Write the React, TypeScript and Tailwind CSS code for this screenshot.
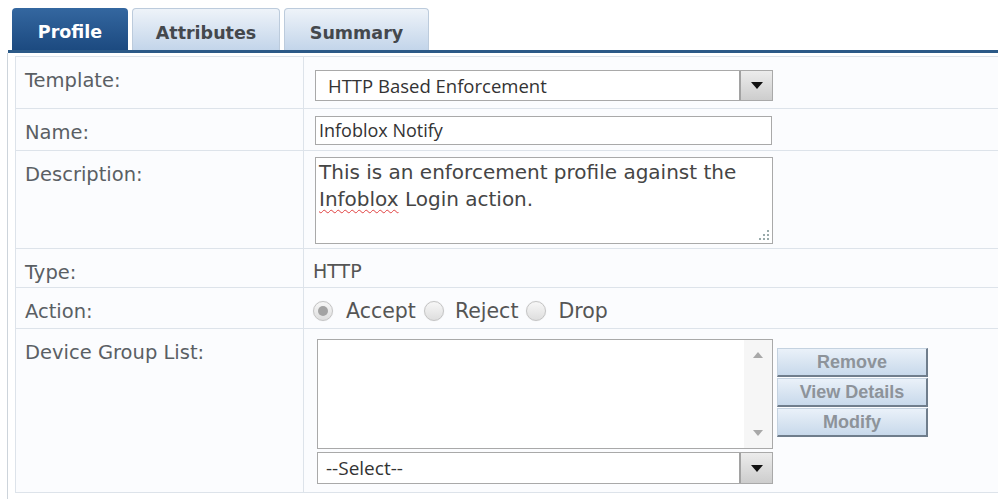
import React from "react";

function Tab({ active, w, children }: { active?: boolean; w: string; children: React.ReactNode }) {
  const base = `${w} h-[42px] rounded-t-[4px] flex items-center justify-center pt-[7px] text-[17.5px] font-bold font-['DejaVu_Sans',sans-serif]`;
  if (active) {
    return (
      <div className={`${base} bg-linear-to-b from-[#3467a0] to-[#1c4a80] text-white`}>{children}</div>
    );
  }
  return (
    <div className={`${base} border border-b-0 border-[#bccbdc] bg-linear-to-b from-[#eef3f9] to-[#c3d5ea] text-[#44484d]`}>
      {children}
    </div>
  );
}

function DropArrow({ h }: { h: string }) {
  return (
    <div className={`w-[33px] ${h} border-l-2 border-[#a2a2a2] bg-linear-to-b from-[#ececec] to-[#cdcdcd] flex items-center justify-center`}>
      <svg width="12" height="7" viewBox="0 0 12 7">
        <polygon points="0,0 12,0 6,7" fill="#111" />
      </svg>
    </div>
  );
}

function Row({ label, h, children }: { label: string; h: string; children: React.ReactNode }) {
  return (
    <div className={`flex ${h} border-b border-[#dde3ea]`}>
      <div className="w-[288px] shrink-0 border-r border-[#dde3ea] pl-[9px] pt-[13px] text-[19.5px] leading-[22px] text-[#5a5f64]">
        {label}
      </div>
      <div className="flex-1">{children}</div>
    </div>
  );
}

function Radio({ checked }: { checked?: boolean }) {
  return (
    <div className="w-[20px] h-[20px] rounded-full border border-[#c4c4c4] bg-linear-to-b from-[#f7f7f7] to-[#dedede] flex items-center justify-center shadow-[0_0_1px_#ddd]">
      {checked && <div className="w-[10px] h-[10px] rounded-full bg-[#a3a3a3]" />}
    </div>
  );
}

function SideButton({ children }: { children: React.ReactNode }) {
  return (
    <div className="w-[151px] h-[29px] border border-[#c4d2e0] border-r-2 border-b-2 border-r-[#6f7d8c] border-b-[#6f7d8c] bg-linear-to-b from-[#eaf1f9] to-[#c8d9eb] flex items-center justify-center text-[18px] font-bold text-[#8d939a] font-['Liberation_Sans',sans-serif]">
      {children}
    </div>
  );
}

export default function App() {
  return (
    <div className="w-[1004px] h-[499px] bg-white overflow-hidden font-['DejaVu_Sans',sans-serif]">
      <div className="flex gap-[4px] pl-[12px] pt-[8px] items-end">
        <Tab active w="w-[116px]">Profile</Tab>
        <Tab w="w-[148px]">Attributes</Tab>
        <Tab w="w-[145px]">Summary</Tab>
      </div>
      <div className="ml-[8px] w-[990px] h-[3px] bg-[#2b5987]" />
      <div className="ml-[7px] w-[991px] h-[446px] border-l border-[#cdd4db] pl-[7px] pt-[3px]">
        <div className="border-t border-l border-[#dde3ea] bg-[#fbfcfe]">
          <Row label="Template:" h="h-[52px]">
            <div className="pl-[11px] pt-[13px]">
              <div className="w-[458px] h-[31px] border border-[#a9a9a9] bg-white flex">
                <div className="flex-1 pl-[12px] flex items-center text-[18.5px] text-[#333] font-['Open_Sans',sans-serif]">
                  HTTP Based Enforcement
                </div>
                <DropArrow h="h-full" />
              </div>
            </div>
          </Row>
          <Row label="Name:" h="h-[42px]">
            <div className="pl-[11px] pt-[7px]">
              <div className="w-[457px] h-[29px] border border-[#a9a9a9] bg-white pl-[3px] flex items-center text-[18px] text-[#333] font-['Open_Sans',sans-serif]">
                Infoblox Notify
              </div>
            </div>
          </Row>
          <Row label="Description:" h="h-[98px]">
            <div className="pl-[11px] pt-[6px]">
              <div className="relative w-[458px] h-[87px] border border-[#a9a9a9] bg-white pl-[3px] pt-[1px] text-[20px] leading-[27px] text-[#454545]">
                This is an enforcement profile against the
                <br />
                <span className="underline decoration-wavy decoration-[#e04040] decoration-1 underline-offset-[3px]">Infoblox</span> Login action.
                <svg className="absolute right-[3px] bottom-[3px]" width="10" height="10" viewBox="0 0 10 10">
                  <rect x="8" y="0" width="2" height="2" fill="#9aa" />
                  <rect x="8" y="4" width="2" height="2" fill="#9aa" />
                  <rect x="4" y="4" width="2" height="2" fill="#9aa" />
                  <rect x="8" y="8" width="2" height="2" fill="#9aa" />
                  <rect x="4" y="8" width="2" height="2" fill="#9aa" />
                  <rect x="0" y="8" width="2" height="2" fill="#9aa" />
                </svg>
              </div>
            </div>
          </Row>
          <Row label="Type:" h="h-[39px]">
            <div className="pl-[9px] pt-[11px] text-[19px] leading-[22px] text-[#555]">HTTP</div>
          </Row>
          <Row label="Action:" h="h-[41px]">
            <div className="pl-[9px] pt-[12px] flex items-center h-[34px] text-[20.5px] leading-[22px] text-[#555]">
              <Radio checked />
              <span className="ml-[13px]">Accept</span>
              <span className="ml-[8px]"><Radio /></span>
              <span className="ml-[11px]">Reject</span>
              <span className="ml-[8px]"><Radio /></span>
              <span className="ml-[12px]">Drop</span>
            </div>
          </Row>
          <Row label="Device Group List:" h="h-[164px]">
            <div className="pl-[13px] pt-[10px] flex">
              <div className="flex flex-col">
                <div className="w-[456px] h-[110px] border border-[#a9a9a9] bg-white flex justify-end">
                  <div className="w-[28px] h-full bg-[#f6f6f6] flex flex-col items-center justify-between py-[12px]">
                    <svg width="10" height="6" viewBox="0 0 10 6"><polygon points="0,6 10,6 5,0" fill="#a8a8a8" /></svg>
                    <svg width="10" height="6" viewBox="0 0 10 6"><polygon points="0,0 10,0 5,6" fill="#a8a8a8" /></svg>
                  </div>
                </div>
                <div className="mt-[3px] w-[456px] h-[32px] border border-[#a9a9a9] bg-white flex">
                  <div className="flex-1 pl-[8px] flex items-center text-[19px] text-[#333] font-['Open_Sans',sans-serif]">
                    --Select--
                  </div>
                  <DropArrow h="h-full" />
                </div>
              </div>
              <div className="ml-[4px] mt-[9px] flex flex-col gap-[1px]">
                <SideButton>Remove</SideButton>
                <SideButton>View Details</SideButton>
                <SideButton>Modify</SideButton>
              </div>
            </div>
          </Row>
        </div>
      </div>
    </div>
  );
}
